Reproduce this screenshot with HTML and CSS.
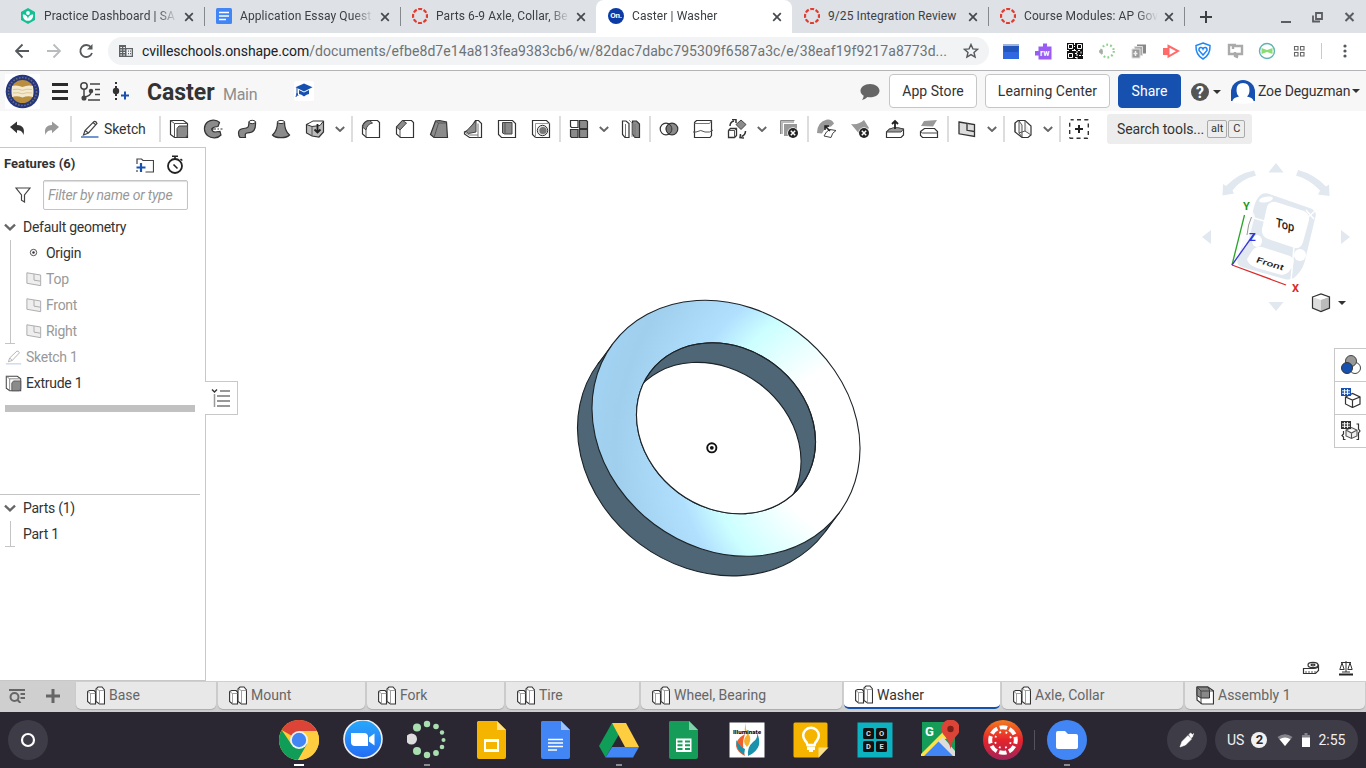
FILE: index.html
```html
<!DOCTYPE html>
<html lang="en">
<head>
<meta charset="utf-8">
<title>Caster | Washer</title>
<link rel="stylesheet" href="styles.css">
</head>
<body>
<svg class="defs" width="0" height="0">
  <defs>
    <symbol id="x" viewBox="0 0 10 10"><path d="M1.2 1.2l7.6 7.6M8.800 1.200L1.200 8.800" stroke="#45484c" stroke-width="1.700" fill="none"/></symbol>
    <symbol id="canvas" viewBox="0 0 16 16"><circle cx="8" cy="8" r="7" fill="none" stroke="#e23b2e" stroke-width="2.200" stroke-dasharray="3.9 1.6" stroke-dashoffset="2"/></symbol>
    <symbol id="chev" viewBox="0 0 10 6"><path d="M.8 1L5 5 9.200 1" fill="none" stroke="#666" stroke-width="1.900"/></symbol>
    <symbol id="parts" viewBox="0 0 18 19"><path d="M.6 5.500l2-1h4.500l1.400 1.500v12H3.500L.6 15.500z" fill="#fff" stroke="#333" stroke-width="1.100"/><path d="M9 3l2-2h4l2.500 3v14h-5L9 15.500z" fill="#fff" stroke="#333" stroke-width="1.100"/><path d="M.6 5.500l2.900 2h5M3.500 7.500V18M9 3l3.500 1.500h5M12.500 4.500V18" fill="none" stroke="#888" stroke-width=".8"/></symbol>
    <symbol id="plane" viewBox="0 0 18 16"><path d="M1 1l15.500 2.500v12L1 12.800z"/><path d="M9 2.300v7l7.500 1.200"/></symbol>
    <symbol id="xdot" viewBox="0 0 10 10"><circle cx="5" cy="5" r="5" fill="#222"/><path d="M2.800 2.800l4.400 4.400M7.200 2.800L2.800 7.200" stroke="#fff" stroke-width="1.500"/></symbol>
    <radialGradient id="face" gradientUnits="userSpaceOnUse" cx="862" cy="450" r="290" gradientTransform="rotate(-36.800 726 428.300)">
      <stop offset=".31" stop-color="#fff"/><stop offset=".53" stop-color="#ccffff"/><stop offset=".64" stop-color="#b1e0ff"/><stop offset=".85" stop-color="#a0cfed"/><stop offset="1" stop-color="#a4d4f5"/>
    </radialGradient>
    <clipPath id="hole"><ellipse cx="726" cy="428.300" rx="94.400" ry="80.100" transform="rotate(36.800 726 428.300)"/></clipPath>
  </defs>
</svg>

<div class="tabstrip">
  <div class="tab"><svg class="fav" viewBox="0 0 16 16"><path d="M8 0l7 4v8l-7 4-7-4V4z" fill="#14bf96"/><circle cx="8" cy="5" r="1.900" fill="#fff"/><path d="M2.800 6.500c3 0 5.200 2 5.200 5 0-3 2.200-5 5.200-5 0 4-2 6.300-5.200 6.300S2.800 10.500 2.800 6.500z" fill="#fff"/></svg><span class="title">Practice Dashboard | SA</span><svg class="close"><use href="#x"/></svg></div>
  <div class="tab"><svg class="fav" viewBox="0 0 16 16"><rect width="16" height="16" rx="1.500" fill="#4285f4"/><path d="M3 4.500h10M3 8h10M3 11.500h7" stroke="#fff" stroke-width="1.700"/></svg><span class="title">Application Essay Quest</span><svg class="close"><use href="#x"/></svg></div>
  <div class="tab"><svg class="fav"><use href="#canvas"/></svg><span class="title">Parts 6-9 Axle, Collar, Be</span><svg class="close"><use href="#x"/></svg></div>
  <div class="tab active"><span class="fav on">On.</span><span class="title">Caster | Washer</span><svg class="close"><use href="#x"/></svg></div>
  <div class="tab"><svg class="fav"><use href="#canvas"/></svg><span class="title full">9/25 Integration Review</span><svg class="close"><use href="#x"/></svg></div>
  <div class="tab"><svg class="fav"><use href="#canvas"/></svg><span class="title">Course Modules: AP Gov</span><svg class="close"><use href="#x"/></svg></div>
  <svg class="newtab" viewBox="0 0 12 12"><path d="M6 0v12M0 6h12" stroke="#3c4043" stroke-width="2"/></svg>
  <svg class="winctl" viewBox="0 0 76 14"><path d="M0 12h10" stroke="#5a5d61" stroke-width="2"/><path d="M35 3h6v6h-6zM32 5.500v6h7" fill="none" stroke="#5a5d61" stroke-width="1.800"/><path d="M64.500 3l8 8M72.500 3l-8 8" stroke="#5a5d61" stroke-width="2"/></svg>
</div>

<div class="navbar">
  <svg class="navicons" viewBox="0 0 90 16" fill="none" stroke="#55585c" stroke-width="1.800"><path d="M14 8H1M7.500 1.500L1 8l6.500 6.500"/><path d="M32 8h13M38.500 1.500L45 8l-6.500 6.500" stroke="#b9bbbe"/><path d="M76 4.200A6 6 0 1 0 77 10"/><path d="M77.500 1v5.500H72z" fill="#55585c" stroke="none"/></svg>
  <div class="omni">
    <svg class="site" viewBox="0 0 14 12"><path d="M0 0h7v3h7v9H0z" fill="#5f6368"/><path d="M1.300 2.500h1.700M4.300 2.500H6M1.300 5H3M4.300 5H6M1.300 7.500H3M4.300 7.500H6M1.300 10H3M4.300 10H6" stroke="#f1f3f4" stroke-width="1.200"/><path d="M7.500 4.200h5.200v6.600H7.500z" fill="#f1f3f4"/><path d="M9 6.200h1M11 6.200h1M9 8.700h1M11 8.700h1" stroke="#5f6368" stroke-width="1.200"/></svg>
    <span class="url"><b>cvilleschools.onshape.com</b>/documents/efbe8d7e14a813fea9383cb6/w/82dac7dabc795309f6587a3c/e/38eaf19f9217a8773d...</span>
    <svg class="star" viewBox="0 0 16 16"><path d="M8 1.500l1.900 4.400 4.700.4-3.600 3.100 1.100 4.700L8 11.600l-4.100 2.500L5 9.400 1.400 6.300l4.700-.4z" fill="none" stroke="#55585c" stroke-width="1.400"/></svg>
  </div>
  <div class="exts">
    <svg viewBox="0 0 18 18"><path d="M1 4V2h16v2z" fill="#9fb4d8"/><path d="M1 4h16v13H1z" fill="#3168e0"/><path d="M1 4h16l-1 6H2z" fill="#2355bd"/></svg>
    <svg viewBox="0 0 18 18"><path d="M4.500 4.500H9V1.500h4v3h4.500v13h-13v-4H1v-4.500h3.500z" fill="#9a5cf5"/><text x="6" y="13.500" font-size="8.500" font-weight="700" fill="#fff">rw</text></svg>
    <svg viewBox="0 0 18 18"><g transform="translate(1 1)"><path d="M0 0h16v16H0z" fill="#111"/><path d="M1.500 1.500h4v4h-4zM10.500 1.500h4v4h-4zM1.500 10.500h4v4h-4z" fill="#111" stroke="#fff"/><path d="M7.500 0v4m0 2v3M0 7.500h3m2 0h4m2 0h2m1 1v3M8 10.500h3m-3 4h2m2-2h4M10 8v8" stroke="#fff" stroke-dasharray="2 1"/></g></svg>
    <svg viewBox="0 0 18 18"><circle cx="9.500" cy="9" r="6.300" fill="none" stroke="#8fd08f" stroke-width="2.200" stroke-dasharray="1.800 2.160"/><circle cx="3" cy="9.500" r="2" fill="#aaa"/></svg>
    <svg viewBox="0 0 18 18"><path d="M7 2.500h9v9H7z" fill="#888"/><path d="M4.500 4.500h8v9h-8z" fill="#aaa" stroke="#ddd"/><path d="M2 7h8v9H2z" fill="#999" stroke="#ddd"/><path d="M5.500 9v5M3.500 11.500h4" stroke="#eee" stroke-width="1.500"/></svg>
    <svg viewBox="0 0 18 18"><path d="M1 6h6v7H1z" fill="#ff6b6b"/><path d="M6.500 4l9.500 5-9.500 5.500z" fill="#fff" stroke="#ff6b6b" stroke-width="2"/></svg>
    <svg viewBox="0 0 18 18" fill="none" stroke="#1f87f5" stroke-width="1.500"><path d="M9 1l7 2.500c.3 6-1.500 10.500-7 13.500C3.500 14 1.700 9.500 2 3.500z"/><path d="M9 13L5 8.500C4.500 5 8 4.500 9 7c1-2.500 4.500-2 4 1.500z"/></svg>
    <svg viewBox="0 0 18 18" fill="none" stroke="#aaa" stroke-width="2.400"><path d="M9 12H3V3h7M7 7V4h9v8h-5v3M9 10v4l3 1.500"/></svg>
    <svg viewBox="0 0 18 18"><circle cx="9" cy="9" r="7.500" fill="none" stroke="#5fb3b5" stroke-width="1.400"/><path d="M3.500 6l5.500 2 5.500-2v6L9 10l-5.500 2z" fill="#8cdc76"/></svg>
    <svg viewBox="0 0 18 18" fill="none" stroke="#666" stroke-width="1.100"><path d="M4.500 4.500h3.500v3.500H4.500zM10.500 4.500h3.500v3.500h-3.500zM4.500 10.500h3.500v3.500H4.500zM10.500 10.500h3.500v3.500h-3.500z"/></svg>
  </div>
  <span class="navsep"></span>
  <svg class="kebab" viewBox="0 0 4 14" fill="#55585c"><circle cx="2" cy="2" r="1.600"/><circle cx="2" cy="7" r="1.600"/><circle cx="2" cy="12" r="1.600"/></svg>
</div>

<div class="header">
  <svg class="logo" viewBox="0 0 35 35"><path d="M0 0h35v35H0z" fill="#fff"/><circle cx="17.500" cy="17.500" r="16.800" fill="#27377e"/><circle cx="17.500" cy="17.500" r="14" fill="none" stroke="#6d7078" stroke-width="1.500" stroke-dasharray="1.500 1.600"/><circle cx="17.500" cy="17.500" r="11.500" fill="#b98e3f"/><path d="M7 12q5-1.500 10.500 1 5.500-2.500 10.500-1v11q-5-1.500-10.500.5Q12 21.500 7 23z" fill="#f3e9cf"/><path d="M8 15.500q5-1 9.500.8 4.500-1.800 9.500-.8M8 19q5-1 9.500.8 4.500-1.800 9.500-.8" fill="none" stroke="#d8bd85" stroke-width=".8"/></svg>
  <svg class="menuicons" viewBox="0 0 78 20" fill="none"><path d="M0 2.500h16M0 9.500h16M0 16.500h16" stroke="#2b2b2b" stroke-width="3"/><g stroke="#444" stroke-width="1.500"><circle cx="32" cy="4" r="3.200"/><circle cx="39" cy="9" r="1.500" fill="#444"/><circle cx="32" cy="16" r="1.800" fill="#444"/><path d="M32 7v9M32 15q7-1 7-5M38 2h10M43 7.500h5M43 12.500h5M36 18h12"/></g><path d="M64 0v18" stroke="#333" stroke-width="2" stroke-dasharray="2 2"/><circle cx="64" cy="9" r="3.200" fill="#333"/><path d="M73 9.500v8M69 13.500h8" stroke="#1651b0" stroke-width="2"/></svg>
  <span class="doc">Caster</span><span class="branch">Main</span>
  <svg class="grad" viewBox="0 0 20 20"><rect width="20" height="20" rx="2" fill="#fff"/><path d="M10 2.500l8.500 3.800L10 10.500 1.500 6.300z" fill="#1651b0"/><path d="M5 9l5 2.600L15 9v4q-2.300.2-5 2.500Q7.300 13.200 5 13z" fill="#1651b0"/><path d="M3 7v5l-1 4M3 12l1 3" stroke="#1651b0" fill="none"/></svg>
  <svg class="bubble" viewBox="0 0 20 18"><path d="M10 1c5.500 0 9.500 3 9.500 6.800S15.500 14.300 10 14.300q-1.300 0-2.500-.2Q5 16.500 2 17q1.500-2 1.700-4.200Q.5 11 .5 7.800C.5 4 4.500 1 10 1z" fill="#666"/></svg>
  <span class="btn app">App Store</span><span class="btn learn">Learning Center</span><span class="btn share">Share</span>
  <svg class="help" viewBox="0 0 30 18"><circle cx="9" cy="9" r="9" fill="#555"/><text x="9" y="14.500" font-size="16" font-weight="700" fill="#fff" text-anchor="middle">?</text><path d="M22 7h8l-4 4z" fill="#333"/></svg>
  <svg class="avatar" viewBox="0 0 24 24"><path d="M0 21V12a12 12 0 0 1 24 0v9z" fill="#1651b0"/><path d="M12 3q6.500 0 6.500 7 0 4.500-2.500 6.500 5.500 1 6.500 4l-1 2.500q-9.500 1.500-19 0l-1-2.500q1-3 6.500-4-2.500-2-2.500-6.500Q5.500 3 12 3z" fill="#fff"/></svg>
  <span class="user">Zoe Deguzman</span>
  <svg class="caret" viewBox="0 0 8 4"><path d="M0 0h8L4 4z" fill="#333"/></svg>
</div>

<div class="tools">
  <div class="cell"><svg viewBox="0 0 20 20"><path d="M3 8l7-5.500v3.500c6 .2 8 4 6.500 10-1-3.500-3-4.700-6.500-4.700v3z" fill="#333"/></svg></div>
  <div class="cell wide"><svg viewBox="0 0 20 20"><path d="M17 8l-7-5.500v3.500c-6 .2-8 4-6.500 10 1-3.500 3-4.700 6.500-4.700v3z" fill="#999"/></svg></div>
  <i class="sep"></i>
  <div class="sketch"><svg viewBox="0 0 20 20"><path d="M3.500 16l1.500-4.500L14 2.500q2-.5 3 2L8.500 14zM5 11.500L8.500 14M13 3.500l3 2.500" fill="#fff" stroke="#444" stroke-width="1.200"/><path d="M1 18h17.500" stroke="#1651b0" stroke-width="1.200"/></svg><span>Sketch</span></div>
  <i class="sep"></i>
  <div class="cell"><svg viewBox="0 0 20 20"><path d="M1.500 1.500h13l4 3v14h-13l-4-3z" fill="#fff" stroke="#333" stroke-width="1.200"/><path d="M5.500 4.500h13M5.500 4.500v14M1.500 1.500l4 3" stroke="#555" fill="none"/><path d="M8 9.500L10 7h8.500v9l-2 2.500H8z" fill="#8b8b8b" stroke="#444"/></svg></div>
  <div class="cell"><svg viewBox="0 0 20 20"><path d="M16.500 3.500l-1.500 4-3 .5q-3 .5-3 2.500t3 2.500l5-.5 1 3.500c-3 3.500-9.500 3.800-13.500.5C.5 13 .3 6.500 4.500 3 8 .5 13.500.5 16.500 3.500z" fill="#8b8b8b" stroke="#333" stroke-width="1.200"/><path d="M8 10h11.500" stroke="#333" stroke-width="1.200" stroke-dasharray="5 1.500 1.500 1.500"/></svg></div>
  <div class="cell"><svg viewBox="0 0 20 20"><path d="M1.500 14q0-4 5-4.500c6-.5 5-2.500 5.500-6.500h6.500c.5 8-2 10.800-8 10.800q-3 0-2 4.700H3q-1.500-1.500-1.500-4.500z" fill="#8b8b8b" stroke="#333" stroke-width="1.200"/><ellipse cx="15.200" cy="3" rx="3.200" ry="1.700" fill="#fff" stroke="#333"/></svg></div>
  <div class="cell"><svg viewBox="0 0 20 20"><path d="M6.500 3c0 6-1.500 10-5 13 3 3.500 14 3.500 17 0-3.500-3-5-7-5-13z" fill="#8b8b8b" stroke="#333" stroke-width="1.200"/><ellipse cx="10" cy="3" rx="3.500" ry="1.600" fill="#fff" stroke="#333"/></svg></div>
  <div class="cell"><svg viewBox="0 0 20 20"><path d="M1.500 5.500V14l5.500 3 7 1 4.500-5V2.500z" fill="#bbb" stroke="#333" stroke-width="1.200"/><path d="M1.500 5.500L8 2h10.500L15 6.500 7 7.500z" fill="#fff" stroke="#333"/><path d="M7 7.500v9.500" stroke="#555"/><path d="M12.500 5v8M9.500 10.500l3 3 3-3" stroke="#222" stroke-width="1.800" fill="none"/></svg></div>
  <div class="drop"><svg><use href="#chev"/></svg></div>
  <i class="sep"></i>
  <div class="cell"><svg viewBox="0 0 20 20"><path d="M1.500 15V7q2-5.500 7-5.500h8l2 2v15h-13z" fill="#fff" stroke="#333" stroke-width="1.200"/><path d="M1.500 8q2-6 7-6.500l3 2.500Q6 5 5 11z" fill="#8b8b8b" stroke="#444"/><path d="M5 11v7.500" stroke="#555"/></svg></div>
  <div class="cell"><svg viewBox="0 0 20 20"><path d="M1.500 15V8l6-6.500h9l2 2v15h-13z" fill="#fff" stroke="#333" stroke-width="1.200"/><path d="M1.500 8l6-6.500 4 2.500L5 11z" fill="#8b8b8b" stroke="#444"/><path d="M5 11v7.500" stroke="#555"/></svg></div>
  <div class="cell"><svg viewBox="0 0 20 20"><path d="M1.500 15.500l5-13.500 4-.5 7 1.500 1 15.500H5z" fill="#8b8b8b" stroke="#333" stroke-width="1.200"/><path d="M5 18.500L9.500 4h8M6.500 2l3 2" stroke="#555" fill="none"/></svg></div>
  <div class="cell"><svg viewBox="0 0 20 20"><path d="M12.500 1.500h3l3 3v14h-12l-5-3.500v-2L6 11z" fill="#fff" stroke="#333" stroke-width="1.200"/><path d="M13 2v11l-7.500 1.500L3 12.500z" fill="#8b8b8b" stroke="#444"/><path d="M15 4.500v14M1.500 13l5 3h8.500" fill="none" stroke="#777"/></svg></div>
  <div class="cell"><svg viewBox="0 0 20 20"><path d="M1.500 1.500h14l3 3v14h-14l-3-3z" fill="#fff" stroke="#333" stroke-width="1.200"/><path d="M5.500 3.500h9.500v11.500H7.500l-2-1z" fill="#8b8b8b" stroke="#444"/><path d="M8 3.500v11" stroke="#555"/></svg></div>
  <div class="cell"><svg viewBox="0 0 20 20"><path d="M1.500 1.500h14l3 3v14h-14l-3-3z" fill="#fff" stroke="#333" stroke-width="1.200"/><path d="M4.500 4.500h14M4.500 4.500v14" stroke="#999"/><circle cx="11.500" cy="11.500" r="5.200" fill="#ddd" stroke="#333"/><circle cx="12" cy="11.500" r="3.600" fill="#777"/></svg></div>
  <i class="sep"></i>
  <div class="cell"><svg viewBox="0 0 20 20"><g fill="#8b8b8b" stroke="#333" stroke-width="1.200"><path d="M1.500 1.500h7.500v7H2.500l-1-1z" fill="#fff"/><path d="M10.500 1.500h7l1 1v7h-8zM1.500 10.500H9v8H2.500l-1-1zM10.500 10.500h8v8h-8z"/></g></svg></div>
  <div class="drop"><svg><use href="#chev"/></svg></div>
  <div class="cell"><svg viewBox="0 0 20 20"><path d="M1.500 2h3.500l3 2.500V18.500H4l-2.500-3z" fill="#fff" stroke="#333" stroke-width="1.200"/><path d="M11.500 2h4l3 3v13.500H14l-2.500-3z" fill="#8b8b8b" stroke="#333" stroke-width="1.200"/><path d="M4.500 5v13M14 5v13" stroke="#777"/><path d="M8 1l3 3v14" fill="none" stroke="#999"/></svg></div>
  <i class="sep"></i>
  <div class="cell"><svg viewBox="0 0 20 20"><circle cx="7" cy="10" r="5.800" fill="#fff" stroke="#333" stroke-width="1.200"/><circle cx="13" cy="10" r="5.800" fill="#8b8b8b" stroke="#333" stroke-width="1.200"/><path d="M10 5a5.800 5.800 0 0 1 0 10 5.800 5.800 0 0 1 0-10z" fill="#777" stroke="#333"/></svg></div>
  <div class="cell"><svg viewBox="0 0 20 20"><path d="M1.500 3.500l2-2h15v15l-1.500 2H1.500z" fill="#fff" stroke="#333" stroke-width="1.200"/><path d="M1.500 4.500h15l2-3" stroke="#777" fill="none"/><path d="M0 13h3q5-3 9 0 5 1 8-2" stroke="#555" fill="none"/></svg></div>
  <div class="cell"><svg viewBox="0 0 20 20"><path d="M1.500 11.500l2-2h6v7l-2 2h-6z" fill="#fff" stroke="#333" stroke-width="1.300"/><path d="M1.500 11.500h6v7M7.500 11.500l2-2" fill="none" stroke="#555"/><path d="M14 1l5 4.500-5 5-5-5z" fill="#8b8b8b" stroke="#444"/><path d="M3 7q0-4 4-5M5 .5h4V4M18.500 12q0 4-4 5.500M17 19l-4-.5.500-3.500" fill="none" stroke="#333" stroke-width="1.500"/></svg></div>
  <div class="drop"><svg><use href="#chev"/></svg></div>
  <div class="cell"><svg viewBox="0 0 20 20"><path d="M2 2h13v2H4v11H2z" fill="#bbb"/><path d="M5 5h13v12H5z" fill="#999"/><path d="M1.500 15V1.500h14" stroke="#888" fill="none"/><circle cx="14" cy="14" r="5.700" fill="#fff"/><use href="#xdot" x="9" y="9" width="10" height="10"/></svg></div>
  <i class="sep"></i>
  <div class="cell"><svg viewBox="0 0 20 20"><path d="M0 14Q0 3 10 .5q5-.5 7 4l-3 3q-6 0-9 7z" fill="#999"/><path d="M7 17q2-5 6-6.500l6 1q-4 2-5 7z" fill="#fff" stroke="#444"/><path d="M13 12L8 7m0 4V7h4" stroke="#222" stroke-width="1.500" fill="none"/></svg></div>
  <div class="cell"><svg viewBox="0 0 20 20"><path d="M0 5q8 1 13-4l5 8-8 8Q5 11 0 5z" fill="#999"/><circle cx="13" cy="14" r="5.700" fill="#fff"/><use href="#xdot" x="8" y="9" width="10" height="10"/></svg></div>
  <div class="cell"><svg viewBox="0 0 20 20"><path d="M1.500 13l3-3h14v6l-2.500 2.500H1.500z" fill="#fff" stroke="#333" stroke-width="1.200"/><path d="M1.500 13q5-7 17-3L16 13z" fill="#999" stroke="#444"/><path d="M10 10V2M7 5l3-3 3 3" stroke="#222" stroke-width="1.800" fill="none"/></svg></div>
  <div class="cell"><svg viewBox="0 0 20 20"><path d="M5 2l13-1-4 6.500-12-.5z" fill="#999"/><path d="M1.500 12.500l4-3h10l3 3v6h-15l-2-2z" fill="#fff" stroke="#333" stroke-width="1.200"/><path d="M1.500 12.500l2 1.500h15" stroke="#444" fill="none"/></svg></div>
  <i class="sep"></i>
  <div class="cell"><svg viewBox="0 0 20 20"><use href="#plane" x="1" y="1" width="18" height="18" fill="#ddd" stroke="#333" stroke-width="1.300"/></svg></div>
  <div class="drop"><svg><use href="#chev"/></svg></div>
  <i class="sep"></i>
  <div class="cell"><svg viewBox="0 0 20 20"><path d="M2 4l3-2.500h7l6 5.500v9l-3 2.500H9L2 13z" fill="#fff" stroke="#333" stroke-width="1.200"/><path d="M2 4v9M6 2v12l3 4V6zM12 2v10l6 4M6 14l6-2" stroke="#555" fill="#ddd" fill-opacity=".5"/></svg></div>
  <div class="drop"><svg><use href="#chev"/></svg></div>
  <i class="sep"></i>
  <div class="cell"><svg viewBox="0 0 20 20"><rect x=".7" y=".7" width="18.600" height="18.600" rx="1" fill="none" stroke="#333" stroke-width="1.400" stroke-dasharray="4 3.300" stroke-dashoffset="1"/><path d="M10 6v8M6 10h8" stroke="#222" stroke-width="2"/></svg></div>
  <div class="search"><span>Search tools...</span><kbd>alt</kbd><kbd>C</kbd></div>
</div>

<div class="main">
  <aside class="side">
    <div class="fhead"><b>Features (6)</b>
      <svg class="folder" viewBox="0 0 18 15"><path d="M1 6V1h4.500l1.500 1.500h10.500v11.500H9.500M1 12v2" fill="none" stroke="#444" stroke-width="1.200"/><path d="M5 5v9M.5 9.500h9" stroke="#1651b0" stroke-width="2.200"/></svg>
      <svg class="watch" viewBox="0 0 18 19"><circle cx="9" cy="11" r="7" fill="none" stroke="#222" stroke-width="1.800"/><path d="M6 1.200h6M9 1v3M14.500 4l1.800 1.500M11.500 13.500L7.500 9.500" stroke="#222" stroke-width="1.600"/></svg></div>
    <div class="filter"><svg viewBox="0 0 16 16"><path d="M1 1h14L9.500 8v7l-3-1.800V8z" fill="none" stroke="#444" stroke-width="1.200"/></svg><span class="inp">Filter by name or type</span></div>
    <div class="row top"><svg class="chv"><use href="#chev"/></svg>Default geometry</div>
    <div class="kids">
      <div class="row"><svg class="org" viewBox="0 0 16 16"><circle cx="7.500" cy="7.500" r="3.200" fill="none" stroke="#555"/><circle cx="7.500" cy="7.500" r="1.200" fill="#333"/></svg>Origin</div>
      <div class="row dim"><svg><use href="#plane" fill="#eee" stroke="#a5a5a5"/></svg>Top</div>
      <div class="row dim"><svg><use href="#plane" fill="#eee" stroke="#a5a5a5"/></svg>Front</div>
      <div class="row dim"><svg><use href="#plane" fill="#eee" stroke="#a5a5a5"/></svg>Right</div>
    </div>
    <div class="row leaf dim"><svg viewBox="0 0 20 20"><path d="M4 15l1.500-4.500L14 2.500q2-.5 3 2L8.500 13.500zM5.500 10.500l3 3" fill="#fff" stroke="#aaa"/><path d="M1 17.500h18" stroke="#b9c9e8" stroke-width="1.200"/></svg>Sketch 1</div>
    <div class="row leaf"><svg viewBox="0 0 20 20"><path d="M1.500 1.500h13l4 3v14h-13l-4-3z" fill="#fff" stroke="#444" stroke-width="1.200"/><path d="M5.500 4.500h13M5.500 4.500v14M1.500 1.500l4 3" stroke="#777" fill="none"/><path d="M8 9.500L10 7h8.500v9l-2 2.500H8z" fill="#8b8b8b" stroke="#555"/></svg>Extrude 1</div>
    <div class="rollback"></div>
    <div class="parts">
      <div class="row top"><svg class="chv"><use href="#chev"/></svg>Parts (1)</div>
      <div class="part">Part 1</div>
    </div>
    <div class="flyout"><svg viewBox="0 0 20 20"><path d="M9 3h10M6 8h13M6 13h13M6 18h13" stroke="#333" stroke-width="1.200"/><path d="M1 1.500L3.500 4 6 1.500" fill="none" stroke="#333" stroke-width="1.400"/><path d="M3.500 6v13" stroke="#999" stroke-width="1.500"/></svg></div>
  </aside>
  <svg class="view" viewBox="206 148 1160 533">
    <g stroke="#1c2328" stroke-width="1.100">
      <ellipse cx="711.500" cy="447.900" rx="141.300" ry="119.900" transform="rotate(36.800 711.500 447.900)" fill="#4e6675"/>
      <path d="M839.500 512.300L825 531.900 598 364l14.500-19.700z" fill="#4e6675" stroke="none"/>
      <path d="M839.500 512.300L825 531.900M598 364l14.500-19.700"/>
      <ellipse cx="726" cy="428.300" rx="141.300" ry="119.900" transform="rotate(36.800 726 428.300)" fill="url(#face)"/>
      <ellipse cx="726" cy="428.300" rx="94.400" ry="80.100" transform="rotate(36.800 726 428.300)" fill="#4e6675"/>
      <g clip-path="url(#hole)"><ellipse cx="711.500" cy="447.900" rx="94.400" ry="80.100" transform="rotate(36.800 711.500 447.900)" fill="#fff"/></g>
      <ellipse cx="726" cy="428.300" rx="94.400" ry="80.100" transform="rotate(36.800 726 428.300)" fill="none"/>
    </g>
    <circle cx="711.800" cy="447.800" r="4.600" fill="#fff" stroke="#111" stroke-width="1.900"/><circle cx="711.800" cy="447.800" r="1.900" fill="#111"/>

    <g fill="#e1e8ef">
      <path d="M1276 163l7.500 9.500h-15zM1276 311l7.500-9h-15zM1202 237l9-7v14zM1350 237l-9-7v14z"/>
      <path d="M1254 170.500l2 5q-16 4-23.500 15l1.500 3-11.500 2 .5-11.500 3 2q12-12.500 28-15.500zM1298 170.500l-2 5q14 4 24 15l-2 4 11.500 1.500-.5-11.500-3 2q-12-12.500-28-16.500z"/>
      <path d="M1260 195.500q3-3 8-2l43 15q6 3 4.500 8l-11 46q-3 9-10 15-4 3-10 1.500l-43-12q-5-2-4-7l15-46q2-14 7.500-18.500z"/>
    </g>
    <g fill="#fff">
      <path d="M1267 207q2-6 9-5l28 9q6 3 5 9l-6 22q-2 7-8 6l-27-9q-7-3-6-10z"/>
      <path d="M1252 251q4-5 10-4l28 9q5 3 3 8-3 10-11 11l-25-7q-10-4-10-9z"/>
      <ellipse cx="1266" cy="199.500" rx="7" ry="2.800" transform="rotate(-12 1266 199.500)"/><ellipse cx="1257" cy="241" rx="5" ry="6"/><ellipse cx="1300" cy="255" rx="6" ry="6"/>
      <path d="M1251 208l4 8-8 30-6 6z" opacity=".8"/>
    </g>
    <path d="M1254 218l10 3M1294 247l-3 34M1306 210l8 9M1315 211l-9 8" stroke="#fff" stroke-width="1.500"/>
    <path d="M1251.500 217q-3.500 7-4.500 18" stroke="#999" fill="none"/>
    <text class="cube" transform="matrix(.97 .28 -.08 1 1275.500 226.500)" font-size="12.500" textLength="19" lengthAdjust="spacingAndGlyphs">Top</text>
    <text class="cube" transform="matrix(1 .31 -.3 .66 1255.500 262)" font-size="11" textLength="27" lengthAdjust="spacingAndGlyphs">Front</text>
    <g stroke-width="1.300"><path d="M1232 265l12.500-50" stroke="#2ba52b"/><path d="M1232 265l22-31" stroke="#3535dd"/><path d="M1232 265l54 20" stroke="#d82a2a"/></g>
    <g class="axis"><text x="1243" y="210" fill="#1a9a1a">Y</text><text x="1249" y="241" fill="#3535dd">Z</text><text x="1292" y="292" fill="#d82a2a">X</text></g>
    <path d="M1312.500 297l8.500-3 8.500 3v11l-8.500 3.500-8.500-3.500z" fill="#ddd"/><path d="M1312.500 297l8.500-3 8.500 3-8.500 3z" fill="#fff"/><path d="M1321 300v11.500l8.500-3.500v-11z" fill="#bbb"/><path d="M1312.500 297l8.500-3 8.500 3v11l-8.500 3.500-8.500-3.500z" fill="none" stroke="#333" stroke-width="1.200"/>
    <path d="M1338 301h8l-4 4z" fill="#333"/>
    <g fill="#fff" stroke="#333" stroke-width="1.200"><path d="M1303.500 668.500h10q5 0 5-4v6l-3 3h-12z"/><ellipse cx="1313" cy="665" rx="5" ry="2.700"/><ellipse cx="1313" cy="665" rx="2" ry=".8"/><path d="M1306 671v2.500M1309 671v2.500M1312 671v2.500M1315 671v2.500" stroke-width=".8"/></g>
    <path d="M1339 674.500h14" stroke="#222" stroke-width="2"/><path d="M1346 661v11M1341 662.500h10M1339.800 669.500l2.200-6.500 2.200 6.500zM1347.800 669.500l2.200-6.500 2.200 6.500zM1342 672h8" fill="none" stroke="#333" stroke-width="1"/>
  </svg>
  <div class="rightpanel">
    <div><svg viewBox="0 0 20 20"><circle cx="14" cy="13" r="5.500" fill="#fff" stroke="#444"/><circle cx="10" cy="6" r="5.500" fill="#999" stroke="#444"/><circle cx="6" cy="13" r="5.500" fill="#1651b0" stroke="#333"/></svg></div>
    <div><svg viewBox="0 0 20 20"><path d="M4.500 9l7-3.500 7.500 3.500v7l-7.500 3.500-7-3.500zM4.500 9l7 3 7.500-3M11.500 12v7.500" fill="#fff" stroke="#333" stroke-width="1.200"/><path d="M0 0h10v8H0z" fill="#1651b0"/><path d="M1 2.800h8M1 5.300h8M3.500 1v6M6.500 1v6" stroke="#fff" stroke-width=".9"/></svg></div>
    <div><svg viewBox="0 0 20 20"><path d="M5 9l5.500-2.500L16 9v6l-5.500 2.500L5 15zM5 9l5.500 3L16 9M10.500 12v5.500" fill="#eee" stroke="#555" stroke-width="1.100"/><path d="M2.500 10v3L1 14.500 2.500 16v2.500h2M15.500 3h2v5l1.500 2-1.500 2v6.500h-2" fill="none" stroke="#333" stroke-width="1.200"/><path d="M0 0h10v8H0z" fill="#333"/><path d="M1 2.800h8M1 5.300h8M3.500 1v6M6.500 1v6" stroke="#fff" stroke-width=".9"/></svg></div>
  </div>
</div>

<div class="doctabs">
  <svg class="dt1" viewBox="0 0 16 14" fill="none" stroke="#666" stroke-width="2"><path d="M0 1h16M11.500 5H16M11.500 9H16" /><circle cx="5.500" cy="8" r="4"/><path d="M8.500 11l3 3"/></svg>
  <svg class="dt2" viewBox="0 0 14 14"><path d="M7 0v14M0 7h14" stroke="#666" stroke-width="3"/></svg>
  <div class="dtab" style="width:140px"><svg><use href="#parts"/></svg>Base</div>
  <div class="dtab" style="width:147px"><svg><use href="#parts"/></svg>Mount</div>
  <div class="dtab" style="width:137px"><svg><use href="#parts"/></svg>Fork</div>
  <div class="dtab" style="width:133px"><svg><use href="#parts"/></svg>Tire</div>
  <div class="dtab" style="width:201px"><svg><use href="#parts"/></svg>Wheel, Bearing</div>
  <div class="dtab cur" style="width:156px"><svg><use href="#parts"/></svg>Washer</div>
  <div class="dtab" style="width:181px"><svg><use href="#parts"/></svg>Axle, Collar</div>
  <div class="dtab" style="width:180px"><svg viewBox="0 0 18 19"><path d="M1 1h11l5.500 4v13H6L1 14z" fill="#fff" stroke="#333" stroke-width="1.200"/><path d="M1 1h11l1.500 3v8H5L1 9.500z" fill="#888" stroke="#333"/><path d="M1 1l4 4h8.500M5 5v13M13 5h4" stroke="#444" fill="none"/></svg>Assembly 1</div>
</div>

<div class="shelf">
  <svg class="launch" viewBox="0 0 40 40"><circle cx="20" cy="20" r="20" fill="#3e3c47"/><circle cx="20" cy="20" r="6" fill="none" stroke="#fff" stroke-width="2.200"/></svg>
  <div class="apps">
    <div class="run on1"><svg viewBox="0 0 40 40"><circle cx="20" cy="20" r="20" fill="#fc3"/><path d="M20 20L2.700 10A20 20 0 0 1 37.900 11H20z" fill="#db4437"/><path d="M2.700 10A20 20 0 0 0 19 40l9-16-8-4-7.500 4.500z" fill="#0f9d58"/><path d="M20 11h17.900A20 20 0 0 1 19 40l9-15z" fill="#ffcd40"/><circle cx="20" cy="20" r="9" fill="#f1f1f1"/><circle cx="20" cy="20" r="7.200" fill="#4285f4"/></svg></div>
    <div><svg viewBox="0 0 40 40"><defs><linearGradient id="zm" x2="0" y2="1"><stop stop-color="#28a9fb"/><stop offset="1" stop-color="#246bf5"/></linearGradient></defs><circle cx="20" cy="19" r="19" fill="url(#zm)" stroke="#eee" stroke-width="1.600"/><path d="M8 13h13q4 0 4 4v9H12q-4 0-4-4zM26 17.500l5.500-4v12l-5.500-4z" fill="#fff"/></svg></div>
    <div class="run"><svg viewBox="0 0 40 40" fill="#a9dfb0"><circle cx="4.500" cy="19" r="5.500" fill="#ddd"/><circle cx="10" cy="7.500" r="4"/><circle cx="20" cy="4" r="3.200"/><circle cx="29" cy="6.500" r="2.800"/><circle cx="35" cy="12.500" r="2.200"/><circle cx="36.500" cy="20" r="2"/><circle cx="35" cy="27" r="2.300"/><circle cx="29" cy="33" r="2.900"/><circle cx="20" cy="35" r="3.200"/><circle cx="10" cy="31" r="4"/></svg></div>
    <div><svg viewBox="0 0 40 40"><path d="M7 1h19l9 9v27q0 2-2 2H8q-2 0-2-2V2z" fill="#f4b400"/><path d="M26 1l9 9h-9z" fill="#fbe08c"/><path d="M13 19h15v13H13z" fill="#fff"/><path d="M15 22h11v7H15z" fill="#f4b400"/></svg></div>
    <div><svg viewBox="0 0 40 40"><path d="M7 1h19l9 9v27q0 2-2 2H8q-2 0-2-2V2z" fill="#4285f4"/><path d="M26 1l9 9h-9z" fill="#a1c2fa"/><path d="M13 19.500h15M13 23h15M13 26.500h15M13 30h9" stroke="#fff" stroke-width="1.700"/></svg></div>
    <div class="run"><svg viewBox="0 0 40 40"><path d="M13 3L0 26l6.500 11.500 14-24z" fill="#0f9d58"/><path d="M13 3h14l13 24H26z" fill="#ffcd40"/><path d="M13 27h27l-6 10.500H6.500z" fill="#4285f4"/></svg></div>
    <div><svg viewBox="0 0 40 40"><path d="M7 1h19l9 9v27q0 2-2 2H8q-2 0-2-2V2z" fill="#159c59"/><path d="M26 1l9 9h-9z" fill="#87ceac"/><path d="M13 18.500h15.500V32H13z" fill="#fff"/><path d="M14.500 21.500h5M22 21.500h5M14.500 25.300h5M22 25.300h5M14.500 29h5M22 29h5" stroke="#159c59" stroke-width="2"/></svg></div>
    <div><svg viewBox="0 0 40 40"><path d="M2.500 2.500h35v35h-35z" fill="#fff"/><path d="M19 3q-1 6 2 10 5 7-1 14-6-6 0-12-4-5-1-12z" fill="#f6b22c"/><path d="M18 14q-9 5-9 12 1 6 9 10-4-11 0-22z" fill="#ef6030"/><path d="M30 13q1 6-4 9-6 5-5 14 9-4 11-11 1-6-2-12zM9 20q0 10 8 15l1-6q-5-2-9-9z" fill="#1992ab"/><text x="20" y="13.500" font-size="6" font-weight="900" text-anchor="middle" fill="#111" textLength="28" lengthAdjust="spacingAndGlyphs">Illuminate</text></svg></div>
    <div><svg viewBox="0 0 40 40"><path d="M4 2.500h31q1.500 0 1.500 1.500v24L28 37.500H4Q2.500 37.500 2.500 36V4Q2.500 2.500 4 2.500z" fill="#f5b400"/><path d="M27.500 27.500h10l-10 10z" fill="#fbe08c"/><path d="M16.500 25q0-2-2.500-4.500a7.800 7.800 0 1 1 12 0Q23.500 23 23.500 25z" fill="none" stroke="#fff" stroke-width="2.500"/><path d="M16 26.500h8v3.500h-2v2h-4v-2h-2z" fill="#fff"/></svg></div>
    <div><svg viewBox="0 0 40 40"><path d="M2.500 2.500h35v35h-35z" fill="#0cb2c0"/><g fill="#111"><rect x="8" y="8" width="11" height="11" rx="1.500"/><rect x="21" y="8" width="11" height="11" rx="1.500"/><rect x="8" y="21" width="11" height="11" rx="1.500"/><rect x="21" y="21" width="11" height="11" rx="1.500"/></g><g fill="#ddd" font-size="7.500" font-weight="700" text-anchor="middle"><text x="13.500" y="16.300">C</text><text x="26.500" y="16.300">O</text><text x="13.500" y="29.300">D</text><text x="26.500" y="29.300">E</text></g></svg></div>
    <div><svg viewBox="0 0 40 40"><path d="M3 2h33v34H3z" fill="#159c59"/><path d="M3 36l17-18 16 16v2z" fill="#4285f4"/><path d="M2 34L34 2h2v14L20 21 5 36H2z" fill="#ffe047"/><path d="M19 21l5-4 12 14v5h-2z" fill="#ddd"/><path d="M31.500 29Q30 20 24 14a9.200 9.200 0 1 1 15 0Q33 20 31.500 29z" fill="#db4437"/><circle cx="31.500" cy="9" r="3.200" fill="#7d2018"/><text x="6" y="15.500" font-size="13" font-weight="700" fill="#fff">G</text></svg></div>
    <div class="divide"><svg viewBox="0 0 40 40"><defs><linearGradient id="cv" x2="0" y2="1"><stop stop-color="#f47b20"/><stop offset=".5" stop-color="#e5232b"/><stop offset="1" stop-color="#a1235b"/></linearGradient></defs><circle cx="20" cy="20" r="20" fill="url(#cv)"/><circle cx="20" cy="20" r="12.800" fill="none" stroke="#fff" stroke-width="4" stroke-dasharray="7.500 2.550" stroke-dashoffset="3.700"/><circle cx="20" cy="20" r="8" fill="none" stroke="#fff" stroke-width="1.800" stroke-dasharray="1.800 4.483" stroke-dashoffset="-2.300"/></svg></div>
    <div class="run"><svg viewBox="0 0 40 40"><circle cx="20" cy="20" r="20" fill="#4285f4"/><path d="M11 11h7l3 3h8q2 0 2 2v11q0 2-2 2H11q-2 0-2-2V13q0-2 2-2z" fill="#fff"/></svg></div>
  </div>
  <svg class="pen" viewBox="0 0 40 40"><circle cx="20" cy="20" r="20" fill="#3e3c47"/><path d="M13 27l2-5.500 6-6 3.500 3.500-6 6zM22 14.500l1.500-1.500 2.500 2 .5-1.500-1 3.500-1.500 1z" fill="#fff" stroke="#fff" stroke-width=".6"/></svg>
  <div class="tray"><span>US</span><em>2</em><svg class="wifi" viewBox="0 0 16 12"><path d="M8 12L.5 3Q8-2.500 15.500 3z" fill="#85848b"/><path d="M8 12L2.500 5.200Q8 1.800 13.500 5.200z" fill="#fff"/></svg><svg class="bat" viewBox="0 0 8 14"><path d="M2.500 0h3v2H8v3H0V2h2.500z" fill="#85848b"/><path d="M0 4.500h8V14H0z" fill="#fff"/></svg><span>2:55</span></div>
</div>
</body>
</html>
```

FILE: styles.css
```css
* { box-sizing: border-box; }
body { margin: 0; width: 1366px; height: 768px; overflow: hidden; background: #fff; font-family: Roboto, "Liberation Sans", sans-serif; color: #333; display: flex; flex-direction: column; }
svg { display: block; flex: none; }
.defs { position: absolute; }

.tabstrip { height: 33px; background: #dee1e6; display: flex; align-items: center; padding-left: 8px; flex: none; }
.tab { width: 196px; height: 33px; display: flex; align-items: center; padding-left: 12px; position: relative; flex: none; }
.tab::after { content: ""; position: absolute; right: -1px; top: 7px; width: 1px; height: 19px; background: #85888d; }
.tab.active::after, .tab:nth-child(3)::after { display: none; }
.fav { width: 16px; height: 16px; flex: none; margin-top: -1px; }
.fav.on { background: #0c3ba5; border-radius: 50%; color: #fff; font-size: 8px; line-height: 16px; text-align: center; font-weight: 700; letter-spacing: -.3px; }
.title { width: 134px; margin-left: 8px; margin-top: -2px; font-size: 12px; color: #3c4043; white-space: nowrap; -webkit-mask-image: linear-gradient(90deg, #000 84%, transparent 100%); mask-image: linear-gradient(90deg, #000 84%, transparent 100%); letter-spacing: .1px; }
.title.full { -webkit-mask-image: none; mask-image: none; letter-spacing: .08px; }
.close { width: 10px; height: 10px; margin-left: 6px; }
.tab.active { background: #fff; border-radius: 8px 8px 0 0; }
.newtab { width: 12px; height: 12px; margin-left: 16px; }
.winctl { width: 76px; height: 14px; margin-left: 69px; }

.navbar { height: 37px; display: flex; align-items: center; flex: none; padding-bottom: 1px; }
.navicons { width: 90px; height: 16px; margin-left: 15px; }
.omni { margin-left: 3px; width: 881px; height: 28px; border-radius: 14px; background: #f1f3f4; display: flex; align-items: center; padding-left: 11px; }
.site { width: 14px; height: 12px; }
.url { margin-left: 9px; width: 820px; font-size: 14px; color: #6e7276; white-space: nowrap; letter-spacing: .068px; }
.url b { font-weight: 400; color: #202124; letter-spacing: -.08px; }
.star { width: 16px; height: 16px; margin-left: 1px; }
.exts { display: flex; gap: 14px; margin-left: 13px; }
.exts svg { width: 18px; height: 18px; }
.navsep { width: 1px; height: 16px; background: #c8cacd; margin-left: 13px; }
.kebab { width: 4px; height: 14px; margin-left: 21px; }

.header { height: 41px; border-top: 1px solid #b4b4b6; background: #f7f7f7; display: flex; align-items: center; flex: none; }
.logo { width: 35px; height: 35px; margin-left: 5px; }
.menuicons { width: 78px; height: 20px; margin-left: 12px; margin-top: 2px; }
.doc { font-size: 23px; font-weight: 700; margin-left: 17px; width: 76px; letter-spacing: -.05px; line-height: 30px; margin-top: 3px; }
.branch { font-size: 16px; color: #8d8d8d; width: 71px; margin-top: 7px; letter-spacing: -.3px; }
.grad { width: 20px; height: 20px; }
.bubble { width: 20px; height: 18px; margin-left: 546px; margin-top: 2px; }
.btn { height: 34px; border: 1px solid #c6c6c6; border-radius: 4px; background: #fff; font-size: 14px; line-height: 33px; text-align: center; white-space: nowrap; letter-spacing: .05px; flex: none; }
.app { width: 88px; margin-left: 9px; }
.learn { width: 125px; margin-left: 8px; }
.share { width: 63px; margin-left: 8px; background: #1651b0; border-color: #1651b0; color: #fff; }
.help { width: 30px; height: 18px; margin-left: 10px; margin-top: 2px; }
.avatar { width: 24px; height: 24px; margin-left: 10px; margin-top: 1px; }
.user { width: 93px; margin-left: 3px; font-size: 14px; white-space: nowrap; letter-spacing: -.12px; }
.caret { width: 8px; height: 4px; margin-left: 1px; }

.tools { height: 36px; display: flex; align-items: center; flex: none; }
.cell { width: 34px; display: flex; justify-content: center; flex: none; }
.cell svg, .sketch svg { width: 20px; height: 20px; }
.cell.wide { width: 35px; padding-left: 1px; }
.drop { width: 18px; display: flex; justify-content: center; padding-right: 2px; flex: none; }
.drop svg { width: 10px; height: 6px; }
.sep { width: 4px; height: 26px; border-left: 1px solid transparent; border-right: 1px solid transparent; background: #ddd; background-clip: padding-box; flex: none; }
.sketch { width: 85px; display: flex; align-items: center; padding-left: 7px; font-size: 14px; flex: none; letter-spacing: -.1px; }
.sketch span { margin-left: 4px; }
.search { width: 145px; height: 30px; margin-left: 11px; background: #ededed; border-radius: 3px; font-size: 14px; display: flex; align-items: center; padding-left: 10px; white-space: nowrap; }
.search span { width: 90px; letter-spacing: -.1px; }
kbd { font-family: inherit; font-size: 11px; border: 1px solid #aaa; border-radius: 2px; height: 18px; line-height: 16px; padding: 0 3px; margin-right: 1px; min-width: 17px; text-align: center; }

.main { height: 534px; display: flex; position: relative; flex: none; }
.side { width: 206px; border-top: 1px solid #c8c8c8; border-right: 1px solid #c8c8c8; border-bottom: 1px solid #c8c8c8; position: relative; font-size: 14px; letter-spacing: -.26px; }
.fhead { height: 32px; display: flex; align-items: center; padding-left: 4px; font-size: 13px; letter-spacing: .05px; }
.fhead b { width: 132px; margin-top: -1px; }
.folder { width: 18px; height: 15px; margin-top: 3px; }
.watch { width: 18px; height: 19px; margin-left: 12px; margin-top: 1px; }
.filter { display: flex; align-items: center; height: 30px; padding-left: 15px; margin-bottom: 4px; }
.filter svg { width: 16px; height: 16px; }
.inp { margin-left: 12px; width: 145px; height: 30px; border: 1px solid #c4c4c4; border-radius: 2px; box-shadow: inset 0 1px 1px #ddd; font-style: italic; color: #999; font-size: 14px; line-height: 29px; padding-left: 4px; white-space: nowrap; }
.row { height: 26px; display: flex; align-items: center; white-space: nowrap; }
.row.top { padding-left: 4px; }
.chv { width: 12px; height: 8px; margin-right: 7px; }
.kids { margin-left: 10px; border-left: 1px solid #c4c4c4; position: relative; }
.kids::before { content: ""; position: absolute; left: -6px; bottom: 0; width: 10px; height: 1px; background: #c4c4c4; }
.kids .row { padding-left: 15px; }
.kids svg { width: 16px; height: 16px; margin-right: 4px; }
.dim { color: #999; }
.leaf { padding-left: 5px; }
.leaf svg { width: 17px; height: 17px; margin-right: 4px; }
.rollback { margin: 9px 0 0 5px; width: 190px; height: 7px; background: #c1c1c1; }
.parts { margin-top: 82px; width: 200px; border-top: 1px solid #c4c4c4; }
.part { height: 26px; line-height: 26px; margin-left: 10px; padding-left: 12px; border-left: 1px solid #c4c4c4; position: relative; }
.part::before { content: ""; position: absolute; left: -6px; bottom: 0; width: 10px; height: 1px; background: #c4c4c4; }
.flyout { position: absolute; left: 205px; top: 233px; width: 33px; height: 34px; background: #fff; border: 1px solid #c8c8c8; border-left: 0; display: flex; align-items: center; justify-content: center; }
.flyout svg { width: 20px; height: 20px; }
.view { width: 1160px; height: 533px; margin-top: 1px; }
.cube { fill: #222; font-weight: 500; }
.axis { font-size: 11px; font-weight: 700; }
.rightpanel { position: absolute; right: 0; top: 201px; width: 32px; border: 1px solid #c8c8c8; border-right: 0; background: #fff; }
.rightpanel div { height: 33px; display: flex; align-items: center; justify-content: center; border-bottom: 1px solid #c8c8c8; }
.rightpanel div:last-child { border: 0; height: 32px; }
.rightpanel svg { width: 20px; height: 20px; }

.doctabs { height: 31px; background: #cecfce; display: flex; gap: 2px; padding: 1px 0 3px; flex: none; }
.dt1 { width: 16px; height: 14px; margin: 7px 0 0 9px; }
.dt2 { width: 14px; height: 14px; margin: 7px 14px 0 19px; }
.dtab { height: 27px; background: #e8e8e8; border-radius: 0 0 5px 5px; box-shadow: 0 1px 1px #aaa; display: flex; align-items: center; padding-left: 11px; padding-bottom: 1px; font-size: 14px; color: #666; white-space: nowrap; flex: none; }
.dtab svg { width: 18px; height: 19px; margin-right: 4px; }
.dtab.cur { background: #fff; color: #333; box-shadow: none; border-bottom: 2px solid #1651b0; padding-bottom: 0; }

.shelf { height: 56px; background: #2a2733; display: flex; align-items: center; flex: none; }
.launch { width: 40px; height: 40px; margin-left: 8px; }
.apps { display: flex; margin-left: 219px; width: 832px; flex: none; }
.apps div { width: 64px; height: 56px; display: flex; align-items: center; justify-content: center; position: relative; }
.apps svg { width: 40px; height: 40px; }
.apps .run::after { content: ""; position: absolute; left: 29px; bottom: 2px; width: 6px; height: 2px; background: #8c8a93; }
.apps .on1::after { left: 27px; width: 10px; background: #fff; }
.divide::after { content: ""; position: absolute; right: 0; top: 18px; width: 1px; height: 20px; background: #54525c; }
.pen { width: 40px; height: 40px; margin-left: 68px; }
.tray { margin-left: 8px; width: 143px; height: 40px; border-radius: 20px; background: #3e3c47; color: #f1f1f1; display: flex; align-items: center; padding-left: 12px; font-size: 14px; white-space: nowrap; }
.tray em { font-style: normal; font-weight: 700; font-size: 13px; background: #f1f1f1; color: #2a2733; border-radius: 50%; width: 16px; height: 16px; line-height: 16px; text-align: center; margin-left: 7px; }
.wifi { width: 16px; height: 12px; margin-left: 10px; }
.bat { width: 8px; height: 14px; margin: 0 8px 0 9px; }
```
